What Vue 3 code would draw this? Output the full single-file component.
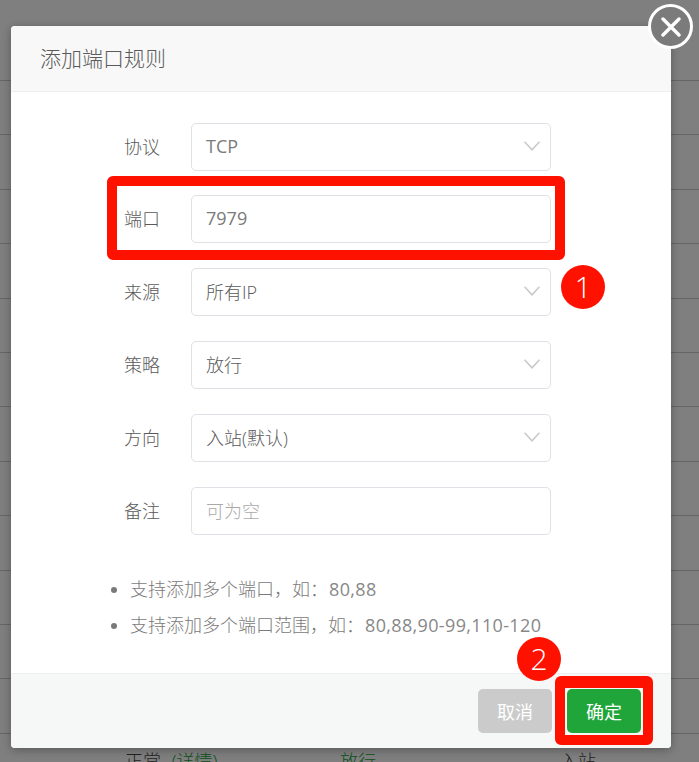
<template>
  <div class="page">
    <!-- table behind the dialog -->
    <div class="table">
      <div v-for="n in 12" :key="n" class="row"></div>
      <div class="row last">
        <span class="status">正常 <em>(详情)</em></span>
        <span class="allow">放行</span>
        <span>入站</span>
      </div>
    </div>

    <div class="mask">
      <div class="dialog">
        <div class="dialog-title">添加端口规则</div>
        <div class="dialog-body">
          <div v-for="field in fields" :key="field.label" class="field">
            <label>{{ field.label }}</label>
            <div class="control" :class="{ empty: field.placeholder, latin: field.latin }">
              <span>{{ field.value || field.placeholder }}</span>
              <svg v-if="field.select" class="arrow" width="16" height="10" viewBox="0 0 16 10">
                <polyline points="0.5,0.8 8,8.8 15.5,0.8" fill="none" stroke="#c8c8c8" stroke-width="1.5" />
              </svg>
            </div>
          </div>
          <ul class="tips">
            <li>支持添加多个端口，如：<span class="num">80,88</span></li>
            <li>支持添加多个端口范围，如：<span class="num">80,88,90-99,110-120</span></li>
          </ul>
        </div>
        <div class="dialog-footer">
          <button class="btn cancel">取消</button>
          <button class="btn ok">确定</button>
        </div>

        <button class="close">
          <svg width="20" height="20" viewBox="0 0 20 20">
            <path d="M2 2 L18 18 M18 2 L2 18" stroke="#fff" stroke-width="3.4" stroke-linecap="round" />
          </svg>
        </button>
      </div>

      <!-- red annotations -->
      <div class="mark mark-port"></div>
      <div class="mark mark-ok"></div>
      <div class="badge badge-1">1</div>
      <div class="badge badge-2">2</div>
    </div>
  </div>
</template>

<script setup>
const fields = [
  { label: '协议', value: 'TCP', select: true, latin: true },
  { label: '端口', value: '7979', latin: true },
  { label: '来源', value: '所有IP', select: true },
  { label: '策略', value: '放行', select: true },
  { label: '方向', value: '入站(默认)', select: true },
  { label: '备注', placeholder: '可为空' }
]
</script>

<style>
html,
body {
  margin: 0;
  background: #fff;
}
</style>

<style scoped>
.page {
  position: relative;
  width: 699px;
  height: 762px;
  overflow: hidden;
  font-family: "Open Sans", "Noto Sans CJK SC", sans-serif;
  font-size: 18px;
  font-weight: 300;
  color: #5a5a5a;
}

.table {
  padding-top: 80px;
}

.row {
  box-sizing: border-box;
  height: 54.4px;
  border-top: 1px solid #ccc;
}

.row.last {
  display: grid;
  grid-template-columns: 215px 220px 1fr;
  padding: 13px 0 0 125px;
  color: #444;
}

.status em {
  margin-left: 6px;
  font-style: normal;
  color: #20a53a;
}

.allow {
  color: #20a53a;
}

.mask {
  position: absolute;
  inset: 0;
  background: rgba(0, 0, 0, 0.5);
}

.dialog {
  position: absolute;
  left: 11px;
  top: 26px;
  width: 660px;
  height: 722px;
  display: flex;
  flex-direction: column;
  background: #fff;
  border-radius: 4px;
  box-shadow: 0 2px 10px rgba(0, 0, 0, 0.3);
}

.dialog-title {
  box-sizing: border-box;
  height: 66px;
  padding-left: 29px;
  font-size: 21px;
  line-height: 65px;
  background: #f8f8f8;
  border-bottom: 1px solid #eee;
  border-radius: 4px 4px 0 0;
}

.dialog-body {
  flex: 1;
  padding: 30.6px 0 0 113px;
}

.field {
  display: flex;
  align-items: center;
  height: 48px;
  margin-bottom: 24.8px;
}

.field label {
  width: 67px;
  flex-shrink: 0;
  padding-bottom: 2px;
}

.control {
  box-sizing: border-box;
  display: flex;
  align-items: center;
  justify-content: space-between;
  width: 360px;
  height: 48px;
  padding: 0 10px 2px 14px;
  border: 1px solid #e0e0e6;
  border-radius: 5px;
  background: #fff;
}

.control.latin {
  font-weight: 400;
  color: #7a7a7a;
}

.control.empty {
  color: #aaa;
}

.tips {
  margin: 0 0 0 -13px;
  padding: 11.4px 0 0 19px;
  line-height: 36px;
  color: #7a7a7a;
}

.num {
  margin-left: 1px;
  font-weight: 400;
  color: #888;
  letter-spacing: 0.35px;
}

.dialog-footer {
  box-sizing: border-box;
  height: 75px;
  display: flex;
  justify-content: flex-end;
  gap: 15px;
  padding: 15px 30px 0 0;
  background: #f6f8f8;
  border-top: 1px solid #eee;
  border-radius: 0 0 4px 4px;
}

.btn {
  width: 74px;
  height: 44px;
  border: 0;
  border-radius: 5px;
  color: #fff;
  font: inherit;
  font-weight: 400;
}

.cancel {
  background: #cbcbcb;
}

.ok {
  background: #20a53a;
}

.close {
  position: absolute;
  right: -22px;
  top: -22px;
  box-sizing: border-box;
  width: 45px;
  height: 45px;
  padding: 0;
  display: flex;
  align-items: center;
  justify-content: center;
  border: 3.5px solid #fff;
  border-radius: 50%;
  background: #7b7b7b;
}

.mark {
  position: absolute;
  box-sizing: border-box;
  border: 10px solid #ff1100;
  border-radius: 6px;
}

.mark-port {
  left: 107px;
  top: 176px;
  width: 458px;
  height: 84px;
}

.mark-ok {
  left: 555px;
  top: 676px;
  width: 98px;
  height: 69px;
  border-top-width: 12px;
}

.badge {
  position: absolute;
  width: 44px;
  height: 44px;
  border-radius: 50%;
  background: #ff1100;
  color: #fff;
  font-size: 30px;
  line-height: 44px;
  text-align: center;
}

.badge-1 {
  left: 561px;
  top: 265px;
}

.badge-2 {
  left: 517px;
  top: 637px;
}
</style>
